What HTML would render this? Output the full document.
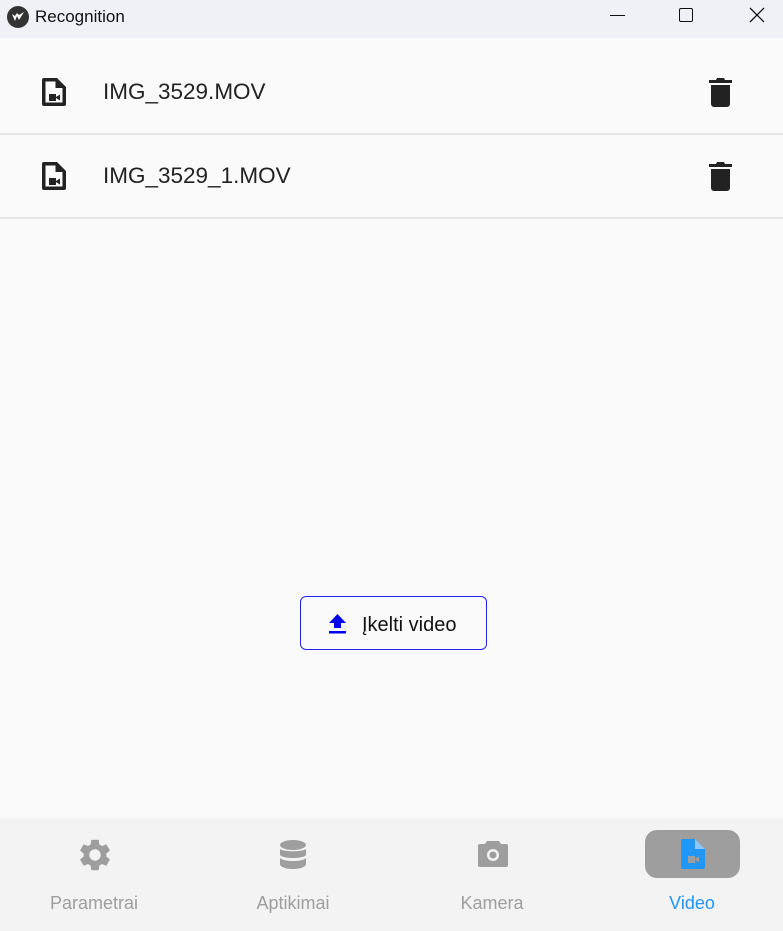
<!DOCTYPE html>
<html><head><meta charset="utf-8"><style>
body{margin:0;width:783px;height:931px;background:#fafafa;font-family:"Liberation Sans",sans-serif;position:relative;overflow:hidden}
.tb{position:absolute;left:0;top:0;width:783px;height:38px;background:#eff1f7}
.row{position:absolute;left:0;width:783px;border-bottom:2px solid #e6e6e6}
.name{position:absolute;left:103px;font-size:22.5px;color:#222}
.nav{position:absolute;left:0;top:818px;width:783px;height:113px;background:#f3f3f3}
.lab{position:absolute;top:893px;font-size:18px;color:#9e9e9e;transform:translateX(-50%)}
svg{position:absolute}
</style></head><body>
<div class="tb">
<svg style="left:7px;top:6px" width="22" height="22" viewBox="0 0 22 22"><circle cx="11" cy="11" r="11" fill="#333"/><path d="M5 8l3 7 2-5 2 4 5-8-5 3-2-2-2 3z" fill="#fff"/></svg>
<div style="position:absolute;left:35px;top:7px;font-size:17px;color:#111">Recognition</div>
<div style="position:absolute;left:610px;top:15px;width:15px;height:1px;background:#111"></div>
<div style="position:absolute;left:679px;top:8px;width:12px;height:12px;border:1.5px solid #111;border-radius:2px"></div>
<svg style="left:749px;top:7px" width="16" height="16"><path d="M1 1L15 15M15 1L1 15" stroke="#111" stroke-width="1.3"/></svg>
</div>
<div class="row" style="top:38px;height:95px"></div>
<div class="row" style="top:135px;height:82px"></div>
<svg style="left:40px;top:76px" width="30" height="32" viewBox="0 0 30 32"><path d="M4 2h13l9 9v17a2 2 0 0 1-2 2H4a2 2 0 0 1-2-2V4a2 2 0 0 1 2-2z M5.5 5.5v21h17V12h-7V5.5z" fill="#222" fill-rule="evenodd"/><path d="M9 18h7v7H9z M16 21l4-2.5v6L16 22z" fill="#222"/></svg>
<div class="name" style="top:79px">IMG_3529.MOV</div>
<svg style="left:40px;top:160px" width="30" height="32" viewBox="0 0 30 32"><path d="M4 2h13l9 9v17a2 2 0 0 1-2 2H4a2 2 0 0 1-2-2V4a2 2 0 0 1 2-2z M5.5 5.5v21h17V12h-7V5.5z" fill="#222" fill-rule="evenodd"/><path d="M9 18h7v7H9z M16 21l4-2.5v6L16 22z" fill="#222"/></svg>
<div class="name" style="top:163px">IMG_3529_1.MOV</div>
<svg style="left:709px;top:77px" width="23" height="30" viewBox="0 0 23 30"><path d="M8 1h7l1 2h7v3H0V3h7z M2 8h19v19a3 3 0 0 1-3 3H5a3 3 0 0 1-3-3z" fill="#222"/></svg>
<svg style="left:709px;top:161px" width="23" height="30" viewBox="0 0 23 30"><path d="M8 1h7l1 2h7v3H0V3h7z M2 8h19v19a3 3 0 0 1-3 3H5a3 3 0 0 1-3-3z" fill="#222"/></svg>
<div style="position:absolute;left:300px;top:596px;width:187px;height:54px;border:1.3px solid #2222ee;border-radius:6px;box-sizing:border-box"></div>
<svg style="left:329px;top:614px" width="17" height="20" viewBox="0 0 17 20"><path d="M8.5 0L17 9h-5v5H5V9H0z M0 17h17v2.5H0z" fill="#0000ee"/></svg>
<div style="position:absolute;left:362px;top:614px;font-size:20px;color:#111">Įkelti video</div>
<div class="nav"></div>
<div style="position:absolute;left:645px;top:830px;width:95px;height:48px;background:#9e9e9e;border-radius:12px"></div>
<svg style="left:76px;top:836px" width="38" height="38" viewBox="0 0 24 24"><path fill="#9e9e9e" d="M19.14 12.94c.04-.3.06-.61.06-.94 0-.32-.02-.64-.07-.94l2.03-1.58a.49.49 0 0 0 .12-.61l-1.92-3.32a.488.488 0 0 0-.59-.22l-2.39.96c-.5-.38-1.030-.7-1.62-.94l-.36-2.54a.484.484 0 0 0-.48-.41h-3.84c-.24 0-.43.17-.47.41l-.36 2.54c-.59.24-1.13.57-1.62.94l-2.39-.96c-.22-.08-.47 0-.59.22L2.74 8.87c-.12.21-.08.47.12.61l2.03 1.58c-.05.3-.09.63-.09.94s.02.64.07.94l-2.03 1.58a.49.49 0 0 0-.12.61l1.920 3.32c.12.22.37.29.59.22l2.39-.96c.5.38 1.03.7 1.62.94l.36 2.54c.05.24.24.41.48.41h3.84c.24 0 .44-.17.47-.41l.36-2.54c.59-.24 1.13-.56 1.62-.94l2.39.96c.22.08.47 0 .59-.22l1.92-3.32c.12-.22.07-.47-.12-.61l-2.01-1.58zM12 15.6c-1.98 0-3.6-1.62-3.6-3.6s1.62-3.6 3.6-3.6 3.6 1.62 3.6 3.6-1.62 3.6-3.6 3.6z"/></svg>
<svg style="left:279px;top:839px" width="28" height="32" viewBox="0 0 28 32"><ellipse cx="14" cy="6" rx="13" ry="5" fill="#9e9e9e"/><path d="M1 10c3 3 23 3 26 0v6c-3 4-23 4-26 0z M1 19c3 4 23 4 26 0v6c0 3-6 5-13 5S1 28 1 25z" fill="#9e9e9e"/></svg>
<svg style="left:477px;top:839px" width="32" height="30" viewBox="0 0 32 30"><path d="M10 2h12l2 3h5a2 2 0 0 1 2 2v19a2 2 0 0 1-2 2H3a2 2 0 0 1-2-2V7a2 2 0 0 1 2-2h5z" fill="#9e9e9e"/><circle cx="16" cy="16" r="6" fill="#f3f3f3"/><circle cx="16" cy="16" r="3.5" fill="#9e9e9e"/></svg>
<svg style="left:680px;top:838px" width="26" height="32" viewBox="0 0 26 32"><path d="M3 1h12l10 10v18a2 2 0 0 1-2 2H3a2 2 0 0 1-2-2V3a2 2 0 0 1 2-2z" fill="#2196f3"/><path d="M15 1v10h10" fill="#8ec5f5"/><path d="M8 18h7v7H8z M15 21l4-2.5v6L15 22z" fill="#9e9e9e"/></svg>
<div class="lab" style="left:94px">Parametrai</div>
<div class="lab" style="left:293px">Aptikimai</div>
<div class="lab" style="left:492px">Kamera</div>
<div class="lab" style="left:692px;color:#2196f3">Video</div>
</body></html>
